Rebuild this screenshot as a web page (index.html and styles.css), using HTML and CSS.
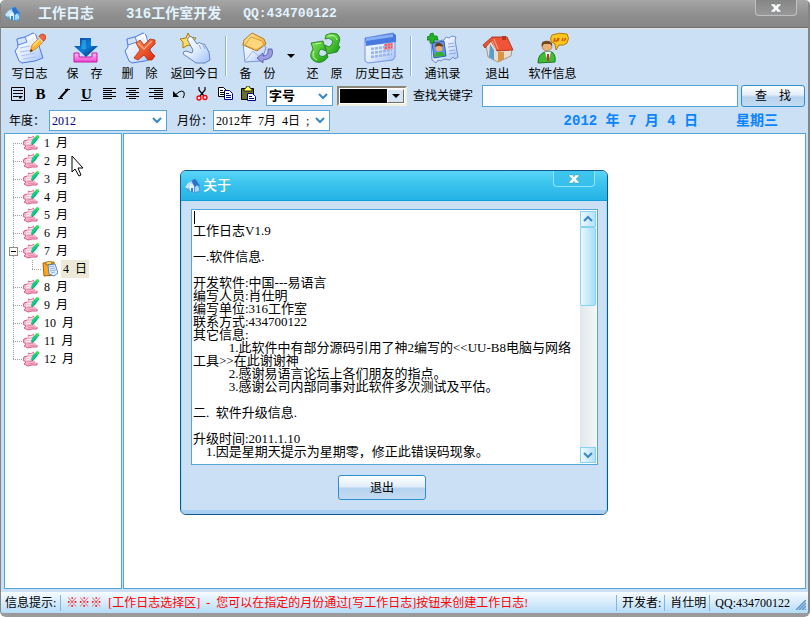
FILE: index.html
```html
<!DOCTYPE html>
<html lang="zh-CN">
<head>
    <meta charset="UTF-8">
    <meta name="viewport" content="width=device-width, initial-scale=1.0">
    <title>工作日志</title>
    <link rel="stylesheet" href="styles.css">
</head>
<body>
    <!-- shared shapes -->
    <svg class="sprite" width="0" height="0" aria-hidden="true">
        <defs>
            <linearGradient id="paperFill" x1="0" y1="0" x2="1" y2="1">
                <stop offset="0" stop-color="#ffffff"/>
                <stop offset="0.5" stop-color="#e2edff"/>
                <stop offset="1" stop-color="#9fc0fb"/>
            </linearGradient>
            <linearGradient id="blueFill" x1="0" y1="0" x2="1" y2="1">
                <stop offset="0" stop-color="#0a3c9a"/>
                <stop offset="0.5" stop-color="#0b7fd8"/>
                <stop offset="1" stop-color="#06246c"/>
            </linearGradient>
            <linearGradient id="pinkFill" x1="0" y1="0" x2="0" y2="1">
                <stop offset="0" stop-color="#ffc4f2"/>
                <stop offset="1" stop-color="#ee3fd0"/>
            </linearGradient>
            <linearGradient id="redFill" x1="0" y1="0" x2="1" y2="1">
                <stop offset="0" stop-color="#ff8a50"/>
                <stop offset="1" stop-color="#d92a0c"/>
            </linearGradient>
            <linearGradient id="greenFill" x1="0" y1="0" x2="1" y2="1">
                <stop offset="0" stop-color="#86e85a"/>
                <stop offset="1" stop-color="#119a12"/>
            </linearGradient>
            <linearGradient id="goldFill" x1="0" y1="0" x2="1" y2="1">
                <stop offset="0" stop-color="#ffe9a0"/>
                <stop offset="1" stop-color="#eda52c"/>
            </linearGradient>
            <symbol id="paper" viewBox="0 0 32 32">
                <path d="M3 7L11 5L19 1L22 3L24 11L29 26L21 29L8 31L5 29L1 19L4 15Z" fill="url(#paperFill)" stroke="#4a7ae6"/>
                <path d="M3 7L11 5L13 10L4 13Z" fill="#d3e2ff" stroke="#5b89ea"/>
                <path d="M14 8L20 3L22 9" fill="none" stroke="#ffffff" stroke-width="2"/>
            </symbol>
            <symbol id="house" viewBox="0 0 16 16">
                <path d="M0 9L3 5L8 1L11 1L15 7L15 13L13 15L6 14L2 12Z" fill="#4e9ce6"/>
                <path d="M0 9L3 5L7 3L6 8L3 11Z" fill="#c3e6fb"/>
                <path d="M4 9L7 5L9 8V14L5 13Z" fill="#dff2ff"/>
                <path d="M10 14V9L12 7L14 10V13Z" fill="#a5d8fa"/>
                <path d="M7 3L10 1L15 8L12 7L10 9Z" fill="#2a6fca"/>
                <path d="M7 10V14" stroke="#3a84d8" stroke-width="2"/>
            </symbol>
            <symbol id="note" viewBox="0 0 16 16">
                <path d="M5 2L8 3L11 1L12 5L11 9L14 12L14 14L9 14L5 15L1 13L3 11L0 9L1 6L4 5Z" fill="#f8b6cb"/>
                <path d="M5 2L8 3L11 1M4 5L1 6L0 9L3 11L1 13L5 15L9 14L14 14L14 12" fill="none" stroke="#d65b88"/>
                <path d="M6 4L10 3M3 7L9 6M3 9L8 8" stroke="#fff0f5"/>
                <path d="M4 11L10 10M5 13L12 12" stroke="#e887a9"/>
                <path d="M14 0L16 2L12 8L9 10L8 9L9 5Z" fill="#12d08c"/>
                <path d="M9 10L16 2" stroke="#0b8d68" stroke-width=".7"/>
                <path d="M13 2L15 0L16 1L14 4Z" fill="#2bf02b"/>
            </symbol>
            <symbol id="chevron" viewBox="0 0 10 8">
                <path d="M1 2L5 6L9 2" fill="none" stroke="#3688c8" stroke-width="2"/>
            </symbol>
            <symbol id="cross" viewBox="0 0 12 10">
                <path d="M1 1H5L6 3L7 1H11V2L8 5L11 8V9H7L6 7L5 9H1V8L4 5L1 2Z" fill="#f4f8fa" stroke="#00000044" stroke-width=".5"/>
            </symbol>
        </defs>
    </svg>

    <div class="window">
        <header class="titlebar">
            <svg class="app-icon" width="16" height="16"><use href="#house"/></svg>
            <h1>工作日志</h1>
            <span class="studio">316工作室开发</span>
            <span class="contact">QQ:434700122</span>
            <button class="close-button" aria-label="关闭"><svg width="12" height="10"><use href="#cross"/></svg></button>
        </header>

        <nav class="toolbar">
            <button class="tool">
                <svg width="32" height="32">
                    <use href="#paper"/>
                    <path d="M6 16L16 14M6 20L18 18M7 24L21 21M9 27L22 25" stroke="#a9c1f3"/>
                    <path d="M16 20L18 13L26 5L30 9L22 17Z" fill="#ffb52b" stroke="#c67a10" stroke-width=".7"/>
                    <path d="M19 14L27 6" stroke="#ffe37c" stroke-width="1.5"/>
                    <path d="M24 6L26 3Q28 1 31 3Q33 6 30 9Z" fill="#f2683c" stroke="#b23b16" stroke-width=".7"/>
                    <path d="M24 5L29 10" stroke="#cdd6e6" stroke-width="1.5"/>
                    <path d="M16 20L17 17L19 19Z" fill="#4b3010"/>
                </svg>
                <span>写日志</span>
            </button>
            <button class="tool">
                <svg width="32" height="32">
                    <path d="M5 21H10V25H23V21H28V30H5Z" fill="url(#pinkFill)" stroke="#c21aa6"/>
                    <path d="M11 6H22V14H29L17 25L5 14H11Z" fill="url(#blueFill)"/>
                    <path d="M13 8H17V17H12Z" fill="#2eb5f2" opacity=".6"/>
                </svg>
                <span>保　存</span>
            </button>
            <button class="tool">
                <svg width="32" height="32">
                    <use href="#paper"/>
                    <path d="M12 11L16 8L20 13L26 7L31 8L31 12L25 18L31 24L28 28L24 28L20 23L14 28L10 26L16 18Z" fill="url(#redFill)" stroke="#b72c10" stroke-width=".8"/>
                    <path d="M14 11L20 17L28 9" fill="none" stroke="#ffb08a" stroke-width="1.2"/>
                </svg>
                <span>删　除</span>
            </button>
            <button class="tool">
                <svg width="32" height="32">
                    <path d="M9 1L11 5L17 6L14 10L16 15L9 13L4 16L4 10L1 7L7 6Z" fill="#ffe05a" stroke="#a87810"/>
                    <path d="M9 6Q11 3 13 5L18 12Q20 9 23 12Q26 11 27 15L30 20L31 28L26 31L17 31L10 26L4 22Q4 19 7 19L13 21L14 18L9 9Q8 7 9 6Z" fill="url(#paperFill)" stroke="#6383be"/>
                    <path d="M20 13L22 17M24 13L26 17" stroke="#8faad9"/>
                </svg>
                <span>返回今日</span>
            </button>
            <i class="separator"></i>
            <button class="tool">
                <svg width="32" height="32">
                    <path d="M1 11L13 8L24 15L20 29L3 30Z" fill="url(#paperFill)" stroke="#7897d4"/>
                    <path d="M2 8L10 1L22 7L24 12L15 19L1 13Z" fill="url(#goldFill)" stroke="#b57c1c"/>
                    <path d="M9 5L20 9L22 13L14 18L3 13Z" fill="#ffd67b" stroke="#c8882a" stroke-width=".7"/>
                    <path d="M3 29L11 19L20 27" fill="none" stroke="#9db6e8"/>
                    <path d="M15 26L21 21V24Q27 24 26 17H30Q33 27 21 28V31Z" fill="#9b9de0" stroke="#5053a8" stroke-width=".8"/>
                </svg>
                <span>备　份</span>
            </button>
            <button class="drop" aria-label="更多备份选项"><svg width="8" height="5"><path d="M0 0H8L4 4Z"/></svg></button>
            <button class="tool">
                <svg width="32" height="32">
                    <path d="M2 11L14 9L17 19L12 17Q8 21 11 24Q14 26 18 22L19 25Q14 32 7 30Q-2 26 4 17Z" fill="url(#greenFill)" stroke="#15791a" stroke-width=".8"/>
                    <path d="M31 15L28 20L18 22L16 13L20 15Q25 11 23 8Q20 5 16 7L17 3Q22 0 28 2Q33 6 29 13Z" fill="url(#greenFill)" stroke="#15791a" stroke-width=".8"/>
                    <path d="M6 12L12 11M5 19Q2 25 8 28M19 4Q27 2 28 8" fill="none" stroke="#c3ffa0"/>
                </svg>
                <span>还　原</span>
            </button>
            <button class="tool">
                <svg width="32" height="32">
                    <path d="M1 6L29 1L31 3V25L29 28L4 31L1 29Z" fill="url(#paperFill)" stroke="#7694dc"/>
                    <path d="M1 6L29 1L32 3V10L2 14Z" fill="#4779e0"/>
                    <path d="M2 6L29 2V5L2 9Z" fill="#88aff9"/>
                    <path d="M20 12L29 11V17L20 18Z" fill="#fb8d8d"/>
                    <path d="M7 17L28 14M7 21L28 18M7 25L28 22" stroke="#9ab4e8" stroke-width="2.5" stroke-dasharray="3 1"/>
                    <path d="M21 13L28 12M21 16L28 15" stroke="#ee5866" stroke-width="2" stroke-dasharray="2 1"/>
                </svg>
                <span>历史日志</span>
            </button>
            <i class="separator"></i>
            <button class="tool">
                <svg width="32" height="32">
                    <path d="M4 10L17 8L19 5L22 6L25 4L29 5L28 8L31 25L28 27L26 25L23 28L17 27L14 29L11 28L9 31L5 28Z" fill="url(#paperFill)" stroke="#7290c7"/>
                    <path d="M5 11L17 9L19 24L7 26Z" fill="#5b97ec" stroke="#2d5dbc"/>
                    <circle cx="12" cy="16" r="3.500" fill="#e9ae78"/>
                    <path d="M8 15Q8 10 13 11Q16 12 16 15Q12 13 8 15Z" fill="#6a3a18"/>
                    <path d="M7 25Q7 20 12 20Q17 19 18 24Z" fill="#36ad39"/>
                    <path d="M21 12L27 11M21 15L28 14M22 19L28 18M22 22L29 21" stroke="#8aa7e3"/>
                    <path d="M3 2L6 1L7 4L10 4L11 8L7 8L7 11L3 11L3 8L0 8L0 5L3 4Z" fill="#23b32b" stroke="#0d7917" stroke-width=".8"/>
                </svg>
                <span>通讯录</span>
            </button>
            <button class="tool">
                <svg width="32" height="32">
                    <path d="M4 13L9 8L15 18L30 17L29 24L16 30L6 25Z" fill="#e8ded0" stroke="#927763" stroke-width=".7"/>
                    <path d="M8 12L12 18V28L7 25Z" fill="#54a0cf"/>
                    <path d="M16 20H22V27L16 30Z" fill="#d99543"/>
                    <path d="M1 13L10 5L25 5L31 18L15 19L9 9L3 16Z" fill="#ee5435" stroke="#a32a14" stroke-width=".8"/>
                    <path d="M12 7L16 17M10 9L14 18" stroke="#ffb295"/>
                    <path d="M20 4H24V8H20Z" fill="#b43a1e"/>
                </svg>
                <span>退出</span>
            </button>
            <button class="tool">
                <svg width="32" height="32">
                    <path d="M1 31Q1 22 8 20L15 20Q19 23 18 30Z" fill="#3fbd35" stroke="#187b1a"/>
                    <path d="M8 20L11 30L14 20Z" fill="#f4f8ff"/>
                    <path d="M10 22H12V29L11 30L10 28Z" fill="#d52828"/>
                    <circle cx="10" cy="14" r="5" fill="#eab17b" stroke="#9b6232" stroke-width=".6"/>
                    <path d="M5 15Q3 8 10 9Q16 9 15 14L13 12L7 12Z" fill="#76491d"/>
                    <path d="M15 3Q22 0 30 2Q33 6 30 11Q27 14 22 13L19 18L18 12Q11 9 15 3Z" fill="#ffc51f" stroke="#b97706"/>
                    <path d="M18 6L17 9H20L21 6M22 6L21 9M26 6L25 9M29 6L27 9" fill="none" stroke="#c8650a" stroke-width="1.5"/>
                </svg>
                <span>软件信息</span>
            </button>
        </nav>

        <form class="format-bar">
            <div class="format-tools">
                <button type="button" aria-label="字体"><svg width="16" height="16"><path d="M1.500 1.500H14.500V14.500H1.500ZM3 4.500H13M3 7.500H13M3 10.500H8" fill="none" stroke="#000"/><path d="M8 10H13L10 13Z"/></svg></button>
                <button type="button" class="bold" aria-label="粗体">B</button>
                <button type="button" aria-label="斜体"><svg width="16" height="16"><path d="M9 3.500H14M2 12.500H7" stroke="#000"/><path d="M12 3L4 12" stroke="#000" stroke-width="2"/></svg></button>
                <button type="button" class="underline" aria-label="下划线">U</button>
                <button type="button" aria-label="左对齐"><svg width="16" height="16"><path d="M1 2.500H14M1 4.500H10M1 6.500H14M1 8.500H10M1 10.500H14M1 12.500H10" stroke="#000"/></svg></button>
                <button type="button" aria-label="居中"><svg width="16" height="16"><path d="M1 2.500H14M4 4.500H11M1 6.500H14M4 8.500H11M1 10.500H14M4 12.500H11" stroke="#000"/></svg></button>
                <button type="button" aria-label="右对齐"><svg width="16" height="16"><path d="M1 2.500H15M6 4.500H15M1 6.500H15M6 8.500H15M1 10.500H15M6 12.500H15" stroke="#000"/></svg></button>
                <button type="button" aria-label="撤销"><svg width="16" height="16"><path d="M4 9L8 6Q11 4 13 6Q14 9 12 12" fill="none" stroke="#000"/><path d="M2 5V11H8Z"/></svg></button>
                <button type="button" aria-label="剪切"><svg width="16" height="16"><path d="M5 1V4L10 10M11 1V4L6 10" fill="none" stroke="#000" stroke-width="1.200"/><circle cx="5" cy="12" r="2" fill="none" stroke="#f00" stroke-width="1.300"/><circle cx="11" cy="11.500" r="2" fill="none" stroke="#f00" stroke-width="1.300"/></svg></button>
                <button type="button" aria-label="复制"><svg width="16" height="16"><path d="M1.500 1.500H6.500L9.500 4.500V10.500H1.500Z" fill="#fff" stroke="#000"/><path d="M3 4.500H6M3 6.500H7M3 8.500H7" stroke="#000"/><path d="M7.500 4.500H12.500L15.500 7.500V13.500H7.500Z" fill="#fff" stroke="#000080"/><path d="M9 7.500H12M9 9.500H14M9 11.500H14" stroke="#000080"/></svg></button>
                <button type="button" aria-label="粘贴"><svg width="16" height="16"><path d="M1.500 2.500H13.500V13.500H1.500Z" fill="#6d6d2c" stroke="#000"/><path d="M4 5V3L6 2L7 0H9L10 2L12 3V5Z" fill="#ffff60" stroke="#000" stroke-width=".8"/><path d="M7.500 7.500H12.500L15.500 10.500V14.500H7.500Z" fill="#fff" stroke="#000080"/><path d="M9 10.500H12M9 12.500H14" stroke="#000080"/></svg></button>
            </div>
            <div class="combo size-combo">
                <select aria-label="字号"><option>字号</option></select>
                <svg class="arrow" width="10" height="8"><use href="#chevron"/></svg>
            </div>
            <div class="color-combo">
                <select aria-label="文字颜色"><option></option></select>
                <span class="color-arrow"><svg width="8" height="4"><path d="M0 0H8L4 4Z"/></svg></span>
            </div>
            <label for="keyword">查找关键字</label>
            <input type="text" id="keyword" name="keyword">
            <button type="button" class="push-button">查　找</button>
        </form>

        <form class="date-bar">
            <label for="year">年度：</label>
            <div class="combo year-combo">
                <select id="year"><option>2012</option></select>
                <svg class="arrow" width="10" height="8"><use href="#chevron"/></svg>
            </div>
            <label for="month">月份：</label>
            <div class="combo month-combo">
                <input type="text" id="month" value="2012年  7月  4日  ;">
                <svg class="arrow" width="10" height="8"><use href="#chevron"/></svg>
            </div>
            <div class="today"><span>2012 年 7 月 4 日</span><span>星期三</span></div>
        </form>

        <main class="panels">
            <ul class="tree">
                <li><svg width="16" height="16"><use href="#note"/></svg><span>1  月</span></li>
                <li><svg width="16" height="16"><use href="#note"/></svg><span>2  月</span></li>
                <li><svg width="16" height="16"><use href="#note"/></svg><span>3  月</span></li>
                <li><svg width="16" height="16"><use href="#note"/></svg><span>4  月</span></li>
                <li><svg width="16" height="16"><use href="#note"/></svg><span>5  月</span></li>
                <li><svg width="16" height="16"><use href="#note"/></svg><span>6  月</span></li>
                <li class="open"><button class="expander" aria-label="折叠"></button><svg width="16" height="16"><use href="#note"/></svg><span>7  月</span></li>
                <li class="day">
                    <i class="branch"></i>
                    <svg width="16" height="16">
                        <path d="M1 2L12 1L13 14L2 15Z" fill="#f6a821" stroke="#a8620a"/>
                        <path d="M4 1L9 0L10 3L4 4Z" fill="#ffd96a" stroke="#8f5a10" stroke-width=".7"/>
                        <path d="M6 4L13 3L16 12L12 15L7 13Z" fill="#e8f1ff" stroke="#3d69b7" stroke-width=".8"/>
                        <path d="M7 6L12 5M8 8L13 7M8 10L14 9M9 12L13 11" stroke="#719be0" stroke-width=".8"/>
                    </svg>
                    <span class="selected">4  日</span>
                </li>
                <li><svg width="16" height="16"><use href="#note"/></svg><span>8  月</span></li>
                <li><svg width="16" height="16"><use href="#note"/></svg><span>9  月</span></li>
                <li><svg width="16" height="16"><use href="#note"/></svg><span>10  月</span></li>
                <li><svg width="16" height="16"><use href="#note"/></svg><span>11  月</span></li>
                <li><svg width="16" height="16"><use href="#note"/></svg><span>12  月</span></li>
            </ul>
            <div class="page"></div>
        </main>

        <footer class="statusbar">
            <span class="status-label">信息提示:</span>
            <span class="hint">※※※  [工作日志选择区]  -  您可以在指定的月份通过[写工作日志]按钮来创建工作日志!</span>
            <span class="developer">开发者:</span>
            <span class="name">肖仕明</span>
            <span class="qq">QQ:434700122</span>
            <svg class="grip" width="10" height="10"><path d="M0 10L10 0M3 10L10 3M6 10L10 6M9 10L10 9" stroke="#5f92c8" stroke-width="1.500"/></svg>
        </footer>
    </div>

    <section class="dialog" role="dialog" aria-labelledby="aboutTitle">
        <header class="dialog-title">
            <svg width="16" height="16"><use href="#house"/></svg>
            <h2 id="aboutTitle">关于</h2>
            <button class="close-button" aria-label="关闭"><svg width="12" height="10"><use href="#cross"/></svg></button>
        </header>
        <div class="dialog-body">
            <div class="about-box">
                <i class="caret"></i>
                <textarea aria-label="关于" readonly>

工作日志V1.9

一.软件信息.

开发软件:中国---易语言
编写人员:肖仕明
编写单位:316工作室
联系方式:434700122
其它信息:
           1.此软件中有部分源码引用了神2编写的&lt;&lt;UU-B8电脑与网络工具&gt;&gt;在此谢谢神
           2.感谢易语言论坛上各们朋友的指点。
           3.感谢公司内部同事对此软件多次测试及平估。

二.  软件升级信息.

升级时间:2011.1.10
    1.因是星期天提示为星期零，修正此错误码现象。</textarea>
                <div class="scrollbar">
                    <button aria-label="向上"><svg class="up" width="10" height="8"><use href="#chevron"/></svg></button>
                    <i class="thumb"></i>
                    <button aria-label="向下"><svg width="10" height="8"><use href="#chevron"/></svg></button>
                </div>
            </div>
            <button class="push-button">退出</button>
        </div>
    </section>

    <svg class="pointer" width="13" height="22" aria-hidden="true"><path d="M1 1V17L4 14L8 21L10 20L7 13H12Z" fill="#fff" stroke="#000"/></svg>
</body>
</html>
```
FILE: styles.css
```css
* {
    box-sizing: border-box;
}

body {
    margin: 0;
    background: #fff;
    color: #000;
    font-family: "Liberation Serif", "Noto Sans CJK SC", serif;
    font-size: 12px;
    line-height: 14px;
}

button,
input,
select,
textarea {
    margin: 0;
    padding: 0;
    border: 0;
    background: none;
    color: inherit;
    font: inherit;
    outline: none;
}

select {
    appearance: none;
}

svg {
    display: block;
    flex: none;
}

.sprite {
    position: absolute;
}

.window {
    display: flex;
    flex-direction: column;
    min-height: 100vh;
    background: #cbe0f4;
    border: 1px solid #858585;
    border-width: 0 2px 4px 1px;
    border-bottom-color: #9a9a9a;
    border-radius: 5px 5px 6px 6px;
    overflow: hidden;
}

/* title bar */
.titlebar {
    display: flex;
    align-items: center;
    height: 29px;
    padding-left: 4px;
    background: linear-gradient(#a6a6a6, #8e8e8e 55%, #868686);
    border-bottom: 1px solid #e9e7e2;
    box-shadow: inset 0 -1px #6e6e6e;
    color: #e2f4ff;
    font-family: "Liberation Mono", "Noto Sans CJK SC", monospace;
    font-size: 14px;
    font-weight: bold;
}

.titlebar h1 {
    margin: 0 32px 0 17px;
    font-size: 14px;
}

.titlebar .contact {
    margin-left: 22px;
    font-size: 13px;
}

.close-button {
    display: flex;
    align-items: center;
    justify-content: center;
    align-self: flex-start;
    width: 42px;
    height: 16px;
    margin-left: auto;
    margin-right: 11px;
    border: 1px solid #c0c0c0;
    border-top: 0;
    border-radius: 0 0 4px 4px;
    background: linear-gradient(#858585, #999);
}

/* toolbar */
.toolbar {
    display: flex;
    height: 55px;
    padding: 3px 0 0 1px;
}

.tool {
    display: flex;
    flex-direction: column;
    align-items: center;
    gap: 3px;
    width: 55px;
    white-space: nowrap;
}

.separator {
    width: 2px;
    height: 40px;
    margin: 4px 3px;
    background: #86b4df;
    border-right: 1px solid #fff;
}

.drop {
    display: flex;
    justify-content: center;
    width: 12px;
    padding-top: 22px;
}

/* format row */
.format-bar {
    display: flex;
    align-items: center;
    height: 24px;
    padding: 0 3px 0 5px;
}

.format-tools {
    display: flex;
    margin-right: 7px;
}

.format-tools button {
    display: flex;
    align-items: center;
    justify-content: center;
    width: 23px;
    height: 24px;
    padding-bottom: 4px;
}

.format-tools .bold,
.format-tools .underline {
    font-size: 15px;
    font-weight: bold;
}

.format-tools .underline {
    text-decoration: underline;
}

.combo {
    position: relative;
    display: flex;
    height: 21px;
    background: #fff;
    border: 1px solid #55a5d9;
}

.combo select,
.combo input {
    width: 100%;
    padding: 0 20px 0 2px;
}

.combo .arrow {
    position: absolute;
    top: 5px;
    right: 4px;
}

.size-combo {
    width: 67px;
    height: 20px;
    font-size: 13px;
    font-weight: bold;
}

.color-combo {
    display: flex;
    width: 70px;
    height: 20px;
    margin: 0 6px 0 4px;
    padding: 1px;
    background: #fff;
    border: 2px solid;
    border-color: #8a8778 #f1efe2 #f1efe2 #8a8778;
}

.color-combo select {
    flex: 1;
    min-width: 0;
    background: #000;
}

.color-arrow {
    display: flex;
    align-items: center;
    justify-content: center;
    width: 17px;
    background: #d6e5f5;
    border: 1px solid;
    border-color: #fff #716f64 #716f64 #fff;
}

#keyword {
    flex: 1;
    min-width: 0;
    height: 22px;
    margin: 0 3px 0 9px;
    padding: 0 3px;
    background: #fff;
    border: 1px solid #55a5d9;
}

.push-button {
    width: 64px;
    height: 22px;
    background: linear-gradient(#fff, #e2eefa 45%, #b5d2ed 55%, #c4dcf2);
    border: 1px solid #2b8fd3;
    border-radius: 3px;
}

/* year and month row */
.date-bar {
    display: flex;
    align-items: center;
    height: 25px;
    padding-left: 8px;
}

.year-combo {
    width: 118px;
    margin: 0 10px 0 4px;
    color: #000080;
}

.month-combo {
    width: 117px;
}

.today {
    display: flex;
    gap: 38px;
    margin-left: auto;
    padding-right: 30px;
    color: #0a84ff;
    font-family: "Liberation Mono", "Noto Sans CJK SC", monospace;
    font-size: 14px;
    font-weight: bold;
}

/* month tree and page */
.panels {
    display: flex;
    flex: 1;
    gap: 1px;
    padding: 0 2px 0 3px;
}

.tree {
    width: 118px;
    margin: 0;
    padding: 0 0 0 8px;
    background: #fff;
    border: 1px solid #55a5d9;
    list-style: none;
}

.tree li {
    position: relative;
    display: flex;
    align-items: center;
    height: 18px;
    white-space: pre;
}

.tree li::before {
    content: "";
    width: 10px;
    height: 18px;
    background:
        repeating-linear-gradient(#a0a0a0 0 1px, transparent 1px 2px) left top / 1px 18px no-repeat,
        repeating-linear-gradient(90deg, #a0a0a0 0 1px, transparent 1px 2px) left 9px / 10px 1px no-repeat;
}

.tree li:first-child::before {
    background-position: left 9px, left 9px;
}

.tree li:last-child::before {
    background-size: 1px 9px, 10px 1px;
}

.tree li.day::before {
    background-size: 1px 18px, 0 0;
}

.tree span {
    margin-left: 4px;
    padding: 2px 1px;
}

.tree .selected {
    margin-left: 3px;
    padding: 2px;
    background: #ece9d8;
}

.branch {
    width: 10px;
    height: 10px;
    margin: -9px 0 0 9px;
    background:
        repeating-linear-gradient(#a0a0a0 0 1px, transparent 1px 2px) left top / 1px 10px no-repeat,
        repeating-linear-gradient(90deg, #a0a0a0 0 1px, transparent 1px 2px) left bottom / 10px 1px no-repeat;
}

.expander {
    position: absolute;
    top: 5px;
    left: -4px;
    width: 9px;
    height: 9px;
    background: linear-gradient(#000, #000) center / 5px 1px no-repeat #fff;
    border: 1px solid #8f8d80;
}

.page {
    flex: 1;
    background: #fff;
    border: 1px solid #55a5d9;
}

/* status bar */
.statusbar {
    display: flex;
    align-items: center;
    height: 21px;
    margin-top: 3px;
    padding: 0 2px 0 4px;
    background: linear-gradient(#f6fbff, #d7ecfb 50%, #b4dcf8);
    white-space: pre;
}

.hint,
.developer,
.name,
.qq {
    padding: 1px 3px 1px 5px;
    border-left: 1px solid #86b4df;
}

.status-label {
    padding-right: 4px;
}

.hint {
    flex: 1;
    color: #f00;
}

.grip {
    align-self: flex-end;
    margin: 0 0 3px 3px;
}

/* about dialog */
.dialog {
    position: absolute;
    top: 170px;
    left: 180px;
    width: 428px;
    background: #cbe0f4;
    border: 1px solid #14568e;
    border-radius: 6px;
    box-shadow: inset 0 0 0 1px #8be4fa;
    overflow: hidden;
}

.dialog-title {
    display: flex;
    align-items: center;
    gap: 2px;
    height: 30px;
    padding-left: 4px;
    background: linear-gradient(#5ad6f8, #3cc5ee 40%, #24b3e6);
    border-bottom: 1px solid #12a0d8;
    color: #fff;
}

.dialog-title h2 {
    margin: 0;
    font-size: 14px;
    font-weight: 500;
}

.dialog-title .close-button {
    margin-right: 12px;
    background: linear-gradient(#3fc7ee, #35bfeb);
    border-color: #8fe3fa;
}

.dialog-body {
    display: flex;
    flex-direction: column;
    gap: 10px;
    padding: 8px 9px 14px 10px;
    box-shadow: inset 0 -4px #a9d0f2;
}

.dialog-body .push-button {
    width: 88px;
    height: 25px;
    margin-left: 147px;
}

.about-box {
    position: relative;
    display: flex;
    height: 256px;
    padding: 1px;
    background: #fff;
    border: 1px solid #55a5d9;
}

.about-box textarea {
    flex: 1;
    min-width: 0;
    font-size: 13px;
    line-height: 13px;
    resize: none;
    overflow: hidden;
}

.caret {
    position: absolute;
    top: 1px;
    left: 2px;
    width: 1px;
    height: 13px;
    background: #000;
}

.scrollbar {
    display: flex;
    flex-direction: column;
    width: 16px;
    background: linear-gradient(90deg, #e0e8ec, #f2f6f7);
}

.scrollbar button {
    display: flex;
    align-items: center;
    justify-content: center;
    height: 16px;
    background: linear-gradient(90deg, #eef9ff, #b4e2fa);
    border: 1px solid #86d2f5;
}

.scrollbar button:last-child {
    margin-top: auto;
}

.scrollbar .up {
    transform: rotate(180deg);
}

.thumb {
    height: 79px;
    background: linear-gradient(90deg, #e8f8ff, #a6def8);
    border: 1px solid #86d2f5;
    border-radius: 2px;
}

.pointer {
    position: absolute;
    top: 155px;
    left: 71px;
}
```
